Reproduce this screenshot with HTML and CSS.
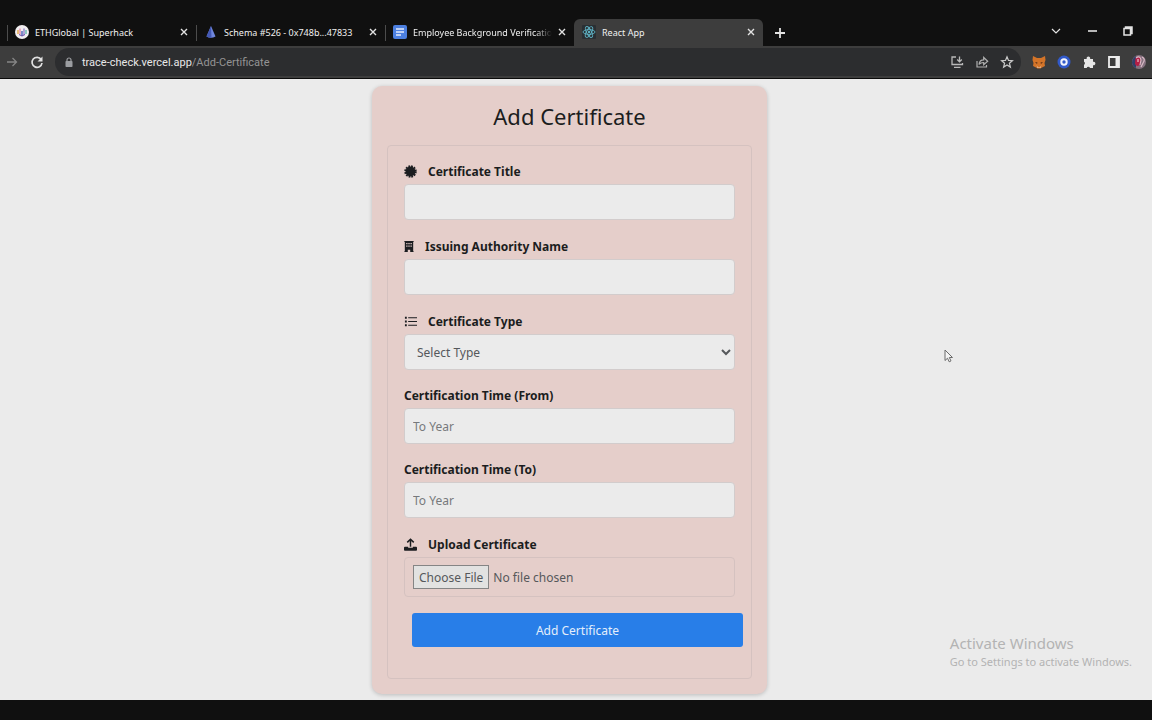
FILE: index.html
```html
<!DOCTYPE html>
<html lang="en">

<head>
    <meta charset="UTF-8">
    <meta name="viewport" content="width=device-width, initial-scale=1.0">
    <title>React App</title>
    <link rel="stylesheet" href="styles.css">
</head>

<body>
    <!-- tabs -->
    <header class="tab-strip">
        <div class="tab">
            <svg class="favicon" viewBox="0 0 14 14">
                <circle cx="7" cy="7" r="7" fill="#f1eef0" />
                <path d="M3 5v4" stroke="#e8a33c" stroke-width="1.3" />
                <path d="M5 3.5v6" stroke="#e58aa8" stroke-width="1.3" />
                <path d="M7 6v5" stroke="#4a62b8" stroke-width="1.4" />
                <path d="M9 3.5v6.5" stroke="#8f7cc9" stroke-width="1.3" />
                <path d="M11 5v4" stroke="#57b6a5" stroke-width="1.3" />
                <path d="M4 9.5q3 3 6 0" stroke="#6a4fa8" fill="none" />
            </svg>
            <button class="tab-title">ETHGlobal | Superhack</button>
            <button class="tab-close" aria-label="Close tab"><svg viewBox="0 0 8 8"><path d="M1 1l6 6M7 1L1 7" /></svg></button>
        </div>
        <div class="tab">
            <svg class="favicon" viewBox="0 0 14 14">
                <path d="M7 1L11.500 11.500Q7 14 2.500 11.500Z" fill="#6f86dd" />
                <path d="M7 1L7.500 12.800Q5 13 2.500 11.500Z" fill="#4459b5" />
            </svg>
            <button class="tab-title">Schema #526 - 0x748b...47833</button>
            <button class="tab-close" aria-label="Close tab"><svg viewBox="0 0 8 8"><path d="M1 1l6 6M7 1L1 7" /></svg></button>
        </div>
        <div class="tab">
            <svg class="favicon" viewBox="0 0 14 14">
                <rect width="14" height="14" rx="2" fill="#4c7fe0" />
                <path d="M3 4h8M3 7h8M3 10h5" stroke="#e4ecfb" stroke-width="1.4" />
            </svg>
            <button class="tab-title fade">Employee Background Verificatio</button>
            <button class="tab-close" aria-label="Close tab"><svg viewBox="0 0 8 8"><path d="M1 1l6 6M7 1L1 7" /></svg></button>
        </div>
        <div class="tab active">
            <svg class="favicon" viewBox="0 0 14 14">
                <rect width="14" height="14" rx="1" fill="#2a2f33" />
                <g fill="none" stroke="#5fb4c6" stroke-width=".9">
                    <ellipse cx="7" cy="7" rx="6" ry="2.400" />
                    <ellipse cx="7" cy="7" rx="6" ry="2.400" transform="rotate(60 7 7)" />
                    <ellipse cx="7" cy="7" rx="6" ry="2.400" transform="rotate(120 7 7)" />
                </g>
                <circle cx="7" cy="7" r="1.200" fill="#5fb4c6" />
            </svg>
            <button class="tab-title">React App</button>
            <button class="tab-close" aria-label="Close tab"><svg viewBox="0 0 8 8"><path d="M1 1l6 6M7 1L1 7" /></svg></button>
        </div>
        <button class="new-tab" aria-label="New tab"><svg viewBox="0 0 10 10"><path d="M5 0v10M0 5h10" /></svg></button>
        <div class="window-buttons">
            <button aria-label="Search tabs"><svg viewBox="0 0 12 12"><path d="M2 4l4 4 4-4" stroke-width="1.200" /></svg></button>
            <button aria-label="Minimize"><svg viewBox="0 0 12 12"><path d="M2 6h9" stroke-width="1.600" /></svg></button>
            <button aria-label="Restore"><svg viewBox="0 0 12 12"><path d="M2 3.500h6.500V10H2zM3.500 3.500V2H10v6.500H8.500" stroke-width="1.500" /></svg></button>
        </div>
    </header>

    <!-- address bar -->
    <nav class="toolbar">
        <button class="tool" aria-label="Forward"><svg viewBox="0 0 14 14"><path d="M2 7h9.500M7.500 3l4 4-4 4" stroke="#858585" stroke-width="1.300" /></svg></button>
        <button class="tool" aria-label="Reload"><svg viewBox="0 0 14 14"><path d="M11.200 4.500A5 5 0 1 0 12 8" stroke-width="1.700" /><path d="M12.500 1.500v5h-5z" fill="#e2e2e2" stroke="none" /></svg></button>
        <form class="address">
            <svg class="lock" viewBox="0 0 8 10"><path d="M2 5V3a2 2 0 0 1 4 0v2" fill="none" stroke="#9b9da1" stroke-width="1.200" /><rect x=".5" y="4" width="7" height="6" rx=".8" fill="#9b9da1" /></svg>
            <label for="path">trace-check.vercel.app</label>
            <input id="path" type="text" value="/Add-Certificate">
            <button class="tool" type="button" aria-label="Install"><svg viewBox="0 0 14 14"><path d="M6 2H2v7.500h10.500V8M4 12.300h6.500M9.500 1.500v5M7.200 4.500l2.300 2.300 2.300-2.300" stroke="#b9b9b9" stroke-width="1.300" /></svg></button>
            <button class="tool" type="button" aria-label="Share"><svg viewBox="0 0 14 14"><path d="M2 6v6h9.500v-2M4 9.500c.3-3 2-4.700 4.700-4.700V2.500l4 3.800-4 3.500V7.500C6.500 7.500 5 8 4 9.500z" stroke="#b0b0b0" stroke-width="1.200" /></svg></button>
            <button class="tool" type="button" aria-label="Bookmark"><svg viewBox="0 0 14 14"><path d="M7 1.800l1.500 3.600 3.900.3-3 2.500 1 3.900L7 10l-3.400 2.100 1-3.900-3-2.500 3.900-.3z" stroke="#c9c9c9" stroke-width="1.200" /></svg></button>
        </form>
        <div class="extensions">
            <button class="tool" aria-label="MetaMask"><svg viewBox="0 0 14 14"><path d="M1 1l4 2h4l4-2 .5 4-1 3 .5 3-3 1.500-1.500 1h-3L4 12.500 1 11l.5-3-1-3z" fill="#d47428" stroke="none" /><path d="M4.500 10l1.500 2.500h2L9.500 10 8.500 13h-3z" fill="#e8d3c0" stroke="none" /><path d="M3 7l2.500.5L5 9zM11 7l-2.500.5L9 9z" fill="#542b15" stroke="none" /></svg></button>
            <button class="tool" aria-label="Wallet"><svg viewBox="0 0 14 14"><circle cx="7" cy="7" r="6.500" fill="#3159c9" stroke="none" /><circle cx="7" cy="7" r="2.700" fill="#3159c9" stroke="#f2f4fb" stroke-width="2" /></svg></button>
            <button class="tool" aria-label="Extensions"><svg viewBox="0 0 14 14"><path d="M2 4h2.700a1.800 1.800 0 1 1 3.400 0H11v2.800a1.800 1.800 0 1 1 0 3.400V13H8a1.700 1.700 0 0 0-3.300 0H2V9.800a1.700 1.700 0 0 0 0-3z" fill="#e6e6e6" stroke="none" /></svg></button>
            <button class="tool" aria-label="Side panel"><svg viewBox="0 0 14 14"><path d="M2 2h10v10H2z" stroke="#ededed" stroke-width="1.800" /><path d="M8.500 2H12v10H8.500z" fill="#ededed" stroke="none" /></svg></button>
            <button class="tool" aria-label="Profile"><svg viewBox="0 0 14 14"><circle cx="7" cy="7" r="7" fill="#85717f" stroke="none" /><path d="M4 1Q0 3 0 8q1 4 4 5z" fill="#31406a" stroke="none" /><path d="M3.500 3Q8 0 9 4v5Q5 13 3 9z" fill="#b51e45" stroke="none" /><path d="M4 3q4-3 5 2l-1 5M10 2q4 2 1 6l-2 4" stroke="#d9bcc7" stroke-width="1.200" /><path d="M6 4v3" stroke="#f3dfe4" /></svg></button>
        </div>
    </nav>

    <main class="page">
        <section class="card">
            <h1>Add Certificate</h1>
            <form class="form-box">
                <div class="form-group">
                    <label for="title">
                        <svg class="icon" viewBox="0 0 14 14"><circle cx="7" cy="7" r="5.300" /><circle cx="7" cy="7" r="5.800" fill="none" stroke="#1b1d20" stroke-width="1.800" stroke-dasharray="1.900 1.136" /></svg>
                        Certificate Title
                    </label>
                    <input type="text" id="title">
                </div>
                <div class="form-group">
                    <label for="authority">
                        <svg class="icon narrow" viewBox="0 0 10 14"><path fill-rule="evenodd" d="M0 1h10v1.200h-.5V12h.5v1H6.300v-2.500H3.700V13H0v-1h.5V2.200H0zM2 3.200v1.300h1.400V3.200zm2.300 0v1.300h1.400V3.200zm2.300 0v1.300H8V3.200zM2 6v1.300h1.400V6zm2.300 0v1.300h1.400V6zm2.300 0v1.300H8V6z" /></svg>
                        Issuing Authority Name
                    </label>
                    <input type="text" id="authority">
                </div>
                <div class="form-group">
                    <label for="type">
                        <svg class="icon" viewBox="0 0 14 14"><path d="M1 2h2v2H1zM1 6h2v2H1zM1 10h2v2H1zM4.500 2.400H14v1.200H4.500zM4.500 6.400H14v1.200H4.500zM4.500 10.400H14v1.200H4.500z" /></svg>
                        Certificate Type
                    </label>
                    <select id="type">
                        <option>Select Type</option>
                    </select>
                </div>
                <div class="form-group">
                    <label for="from">Certification Time (From)</label>
                    <input type="text" id="from" placeholder="To Year">
                </div>
                <div class="form-group">
                    <label for="to">Certification Time (To)</label>
                    <input type="text" id="to" placeholder="To Year">
                </div>
                <div class="form-group">
                    <label for="file">
                        <svg class="icon" viewBox="0 0 14 14"><path d="M0 10.500q0-1 1-1h3.500v1h5v-1H13q1 0 1 1V13q0 .8-1 .8H1q-1 0-1-.8z" /><path d="M7 9.500V1.500M3.500 4.700L7 1.300l3.500 3.400" fill="none" stroke="#1b1d20" stroke-width="1.600" /></svg>
                        Upload Certificate
                    </label>
                    <input type="file" id="file">
                </div>
                <button class="submit" type="submit">Add Certificate</button>
            </form>
        </section>
        <aside class="watermark">
            <p class="big">Activate Windows</p>
            <p>Go to Settings to activate Windows.</p>
        </aside>
        <svg class="pointer" viewBox="0 0 10 14"><path d="M1 1v10.500l2.500-2.300 1.700 3.600 1.800-.9-1.700-3.400h3.200z" fill="#f4f4f4" stroke="#6b6b6b" /></svg>
    </main>
    <footer class="taskbar"></footer>
</body>

</html>
```
FILE: styles.css
```css
* {
    margin: 0;
    padding: 0;
    box-sizing: border-box;
}

body {
    display: flex;
    flex-direction: column;
    min-height: 100vh;
    background: #ebebeb;
    color: #1b1d20;
    font-family: "Noto Sans", "Open Sans", sans-serif;
    font-size: 12px;
}

button,
input,
select {
    font: inherit;
    color: inherit;
}

button {
    border: none;
    background: none;
}

/* tabs */
.tab-strip {
    display: flex;
    padding: 19px 18px 0 7px;
    background: #101010;
    color: #f0f0f0;
    font-size: 9px;
}

.tab-strip svg {
    fill: none;
    stroke: #e3e3e3;
}

.tab {
    display: flex;
    align-items: center;
    flex: 0 1 189px;
    min-width: 0;
    height: 27px;
    padding: 0 8px 1px;
    background: linear-gradient(#4c4c4c, #4c4c4c) left center / 1px 16px no-repeat;
}

.tab.active {
    background: #3d3d3d;
    border-radius: 6px 6px 0 0;
}

.tab-strip .favicon {
    flex: none;
    width: 14px;
    height: 14px;
    stroke: none;
}

.tab-title {
    flex: 1;
    min-width: 0;
    margin: 0 6px;
    overflow: hidden;
    text-align: left;
    white-space: nowrap;
}

.tab-title.fade {
    -webkit-mask-image: linear-gradient(to right, #000 88%, transparent);
    mask-image: linear-gradient(to right, #000 88%, transparent);
}

.tab-close,
.tab-close svg {
    display: block;
    width: 8px;
    height: 8px;
}

.tab-close svg {
    stroke-width: 1.4;
}

.new-tab {
    padding: 0 12px;
}

.new-tab svg {
    display: block;
    width: 10px;
    height: 10px;
    stroke-width: 1.8;
}

.window-buttons {
    display: flex;
    align-items: center;
    gap: 24px;
    height: 24px;
    margin-left: auto;
}

.window-buttons svg {
    display: block;
    width: 12px;
    height: 12px;
}

/* address bar */
.toolbar {
    display: flex;
    align-items: center;
    gap: 11px;
    height: 33px;
    padding: 0 6px 0 5px;
    background: #3d3d3d;
    border-bottom: 1px solid #0b0b0b;
}

.tool svg {
    display: block;
    width: 14px;
    height: 14px;
    fill: none;
    stroke: #e2e2e2;
}

.address {
    display: flex;
    align-items: center;
    flex: 1;
    gap: 11px;
    height: 28px;
    padding: 0 7px 0 10px;
    border-radius: 14px;
    background: #2c2d2f;
    color: #e8e8e8;
    font-family: Roboto, "Noto Sans", sans-serif;
    font-size: 11px;
}

.address .lock {
    width: 8px;
    height: 10px;
    margin-right: -2px;
}

.address input {
    flex: 1;
    min-width: 0;
    margin-left: -11px;
    border: none;
    outline: none;
    background: none;
    color: #949494;
}

.extensions {
    display: flex;
    gap: 11px;
}

/* form page */
.page {
    position: relative;
    flex: 1;
    padding: 7px 13px 5px 0;
}

.card {
    width: 395px;
    max-width: 100%;
    margin: 0 auto;
    padding: 15px;
    border-radius: 10px;
    background: #e5ceca;
    box-shadow: 0 1px 4px rgba(0, 0, 0, .2);
}

.card h1 {
    margin-bottom: 14px;
    font-size: 22px;
    font-weight: 400;
    line-height: 30px;
    text-align: center;
}

.form-box {
    padding: 15px 16px 31px;
    border: 1px solid #d5c2c0;
    border-radius: 4px;
}

.form-group {
    margin-bottom: 16px;
}

.form-group label {
    display: flex;
    align-items: center;
    gap: 11px;
    margin-bottom: 2px;
    font-weight: 700;
    line-height: 20px;
}

.icon {
    width: 13px;
    height: 21px;
    padding: 4px 0;
    fill: #1b1d20;
}

.icon.narrow {
    width: 10px;
}

.form-group input,
.form-group select {
    display: block;
    width: 100%;
    height: 36px;
    padding: 0 8px;
    border: 1px solid #d2cccc;
    border-radius: 4px;
    background: #ebebeb;
    color: #55585b;
}

.form-group input::placeholder {
    color: #77797c;
}

.form-group input[type="file"] {
    height: 40px;
    padding: 7px 8px;
    border-color: #d5c2c0;
    background: none;
}

.form-group input::file-selector-button {
    height: 24px;
    margin-right: 4px;
    padding: 0 5px;
    border: 1px solid #858585;
    background: #e2e2e1;
    color: #55585b;
    font: inherit;
}

.submit {
    width: 100%;
    height: 34px;
    margin-left: 8px;
    border-radius: 3px;
    background: #287ee8;
    color: #e4eefb;
}

/* things over the page */
.watermark {
    position: absolute;
    right: 20px;
    bottom: 29px;
    color: #b3b3b3;
    font-size: 11px;
    line-height: 18px;
}

.watermark .big {
    font-size: 15px;
    line-height: 20px;
}

.pointer {
    position: absolute;
    left: 944px;
    top: 270px;
    width: 10px;
    height: 14px;
}

.taskbar {
    height: 20px;
    background: #101010;
}
```
